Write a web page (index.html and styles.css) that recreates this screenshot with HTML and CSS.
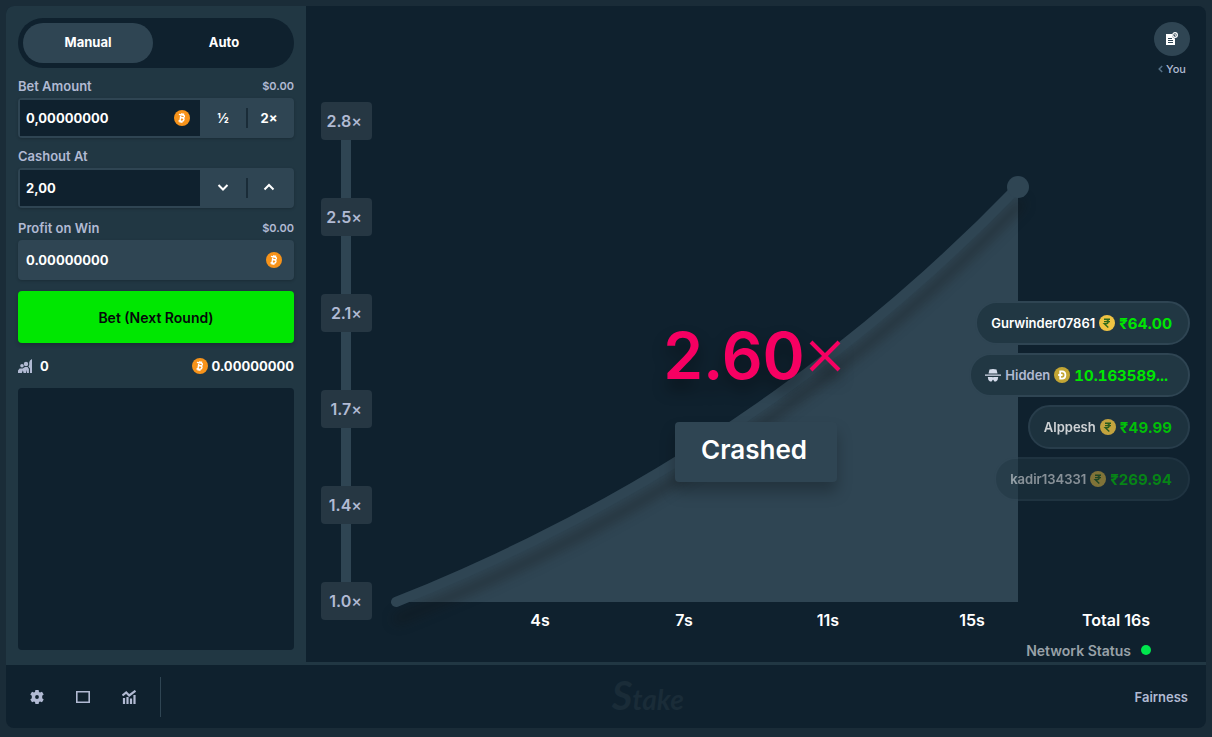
FILE: index.html
```html
<!DOCTYPE html>
<html lang="en">
<head>
    <meta charset="UTF-8">
    <meta name="viewport" content="width=device-width, initial-scale=1.0">
    <title>Crash - Stake</title>
    <link rel="stylesheet" href="styles.css">
</head>
<body>
    <!-- shared icons -->
    <svg class="sprite" aria-hidden="true">
        <symbol id="btc" viewBox="0 0 16 16">
            <circle cx="8" cy="8" r="8" fill="#f7931a"/>
            <path d="M7 4.1 5.9 11.6M4.9 4.4 8.8 5Q10.8 5.4 10.3 6.9 9.9 8.1 8 7.8L6.5 7.6M8.2 7.8Q10.4 8.2 9.9 9.8 9.4 11.6 7.2 11.3L4.4 10.9M8 3.2 7.8 4.7M9.6 3.5 9.4 5M6.3 11.2 6.1 12.7M7.9 11.4 7.7 12.8" fill="none" stroke="#fff" stroke-width="1.4"/>
        </symbol>
        <symbol id="inr" viewBox="0 0 16 16">
            <circle cx="8" cy="8" r="8" fill="#f0c443"/>
            <path d="M5 4.3h6M5 6.6h6M5 4.3h1.8q2.4 0 2.4 2.2T6.8 8.8H5.3L9.3 12.6" fill="none" stroke="#2f6b1c" stroke-width="1.4"/>
        </symbol>
        <symbol id="doge" viewBox="0 0 16 16">
            <circle cx="8" cy="8" r="8" fill="#c3a634"/>
            <path d="M6.2 4.4H8q3.4 0 3.4 3.6T8 11.6H6.2zM4.2 8h4.4" fill="none" stroke="#fff" stroke-width="1.8"/>
        </symbol>
    </svg>

    <div class="game">
        <div class="game-content">
            <form class="sidebar">
                <div class="tabs">
                    <button type="button" class="tab active">Manual</button>
                    <button type="button" class="tab">Auto</button>
                </div>

                <div class="field">
                    <div class="field-label">
                        <label for="bet-amount">Bet Amount</label>
                        <span class="fiat">$0.00</span>
                    </div>
                    <div class="field-box">
                        <div class="input-wrap">
                            <input type="text" id="bet-amount" value="0,00000000">
                            <svg class="coin"><use href="#btc"/></svg>
                        </div>
                        <button type="button" class="box-btn">½</button>
                        <button type="button" class="box-btn">2×</button>
                    </div>
                </div>

                <div class="field">
                    <div class="field-label">
                        <label for="cashout">Cashout At</label>
                    </div>
                    <div class="field-box">
                        <div class="input-wrap">
                            <input type="text" id="cashout" value="2,00">
                        </div>
                        <button type="button" class="box-btn" aria-label="Decrease">
                            <svg width="12" height="12" viewBox="0 0 12 12"><path d="M1.5 4 6 8.5 10.5 4" fill="none" stroke="currentColor" stroke-width="2"/></svg>
                        </button>
                        <button type="button" class="box-btn" aria-label="Increase">
                            <svg width="12" height="12" viewBox="0 0 12 12"><path d="M1.5 8.5 6 4l4.5 4.5" fill="none" stroke="currentColor" stroke-width="2"/></svg>
                        </button>
                    </div>
                </div>

                <div class="field field-profit">
                    <div class="field-label">
                        <label for="profit">Profit on Win</label>
                        <span class="fiat">$0.00</span>
                    </div>
                    <div class="field-box readonly">
                        <div class="input-wrap">
                            <input type="text" id="profit" value="0.00000000" readonly>
                            <svg class="coin"><use href="#btc"/></svg>
                        </div>
                    </div>
                </div>

                <button type="button" class="bet-btn">Bet (Next Round)</button>

                <div class="totals">
                    <span class="total">
                        <svg class="players" width="14" height="14" viewBox="0 0 14 14" fill="currentColor">
                            <circle cx="4" cy="6.8" r="1.8"/>
                            <circle cx="8" cy="5" r="2.2"/>
                            <path d="M11.200 3.600Q11.400 1 14 0v14h-2V9.500l-1.600-1.900Q11.700 6 11.200 3.600zM0 11.500 1.600 9.400h3L7 8h2.600l1.300 2V14H9v-3.200L8 14H5.600l-.7-2.700L3.800 14H0z"/>
                        </svg>
                        0
                    </span>
                    <span class="total total-bet">
                        <svg class="coin"><use href="#btc"/></svg>
                        0.00000000
                    </span>
                </div>

                <div class="bet-list"></div>
            </form>

            <main class="stage">
                <div class="chart">
                    <div class="y-axis">
                        <span class="tick">2.8<i>×</i></span>
                        <span class="tick">2.5<i>×</i></span>
                        <span class="tick">2.1<i>×</i></span>
                        <span class="tick">1.7<i>×</i></span>
                        <span class="tick">1.4<i>×</i></span>
                        <span class="tick">1.0<i>×</i></span>
                    </div>
                    <svg class="plot" viewBox="0 0 792 500" preserveAspectRatio="none">
                        <path class="area" d="M0 500Q359 357 622 85V500z"/>
                        <path class="curve" d="M0 500Q359 357 622 85"/>
                        <circle class="head" cx="622" cy="85" r="11"/>
                    </svg>
                    <div class="x-axis">
                        <span>4s</span>
                        <span>7s</span>
                        <span>11s</span>
                        <span>15s</span>
                        <span>Total 16s</span>
                    </div>
                </div>
                <div class="network">Network Status <span class="dot"></span></div>

                <div class="result">
                    <div class="multiplier">
                        2.60<svg class="times" width="32" height="32" viewBox="0 0 32 32"><path d="M2 2l28 28M30 2 2 30" stroke="currentColor" stroke-width="4"/></svg>
                    </div>
                    <div class="status">Crashed</div>
                </div>

                <div class="history">
                    <button class="history-btn" aria-label="Past bets">
                        <svg width="12" height="13" viewBox="0 0 12 13">
                            <path d="M0 2h6.2a3.4 3.4 0 0 0 2.8 4.6V13H0z" fill="#fff"/>
                            <path d="M2 6.5h4M2 8.5h5M2 10.5h5" stroke="#2f4553" stroke-width="1"/>
                            <circle cx="9" cy="3" r="2.3" fill="none" stroke="#fff" stroke-width="1.3"/>
                            <path d="M9 1.8V3.2h1" fill="none" stroke="#fff" stroke-width="1"/>
                        </svg>
                    </button>
                    <span class="you">
                        <svg width="5" height="8" viewBox="0 0 5 8"><path d="M4.2 1 1.2 4l3 3" fill="none" stroke="#557086" stroke-width="1.5"/></svg>
                        You
                    </span>
                </div>

                <div class="cashouts">
                    <div class="cashout">
                        <span class="name">Gurwinder07861</span>
                        <svg class="coin"><use href="#inr"/></svg>
                        <span class="amount">₹64.00</span>
                    </div>
                    <div class="cashout">
                        <svg class="ghost" width="16" height="13" viewBox="0 0 16 13" fill="currentColor">
                            <path d="M4.500.6Q8-.4 11.500.6L12.500 4.600h-9zM0 5.400h16v1.300H0zM2.800 8h4.600l.6.600.6-.6h4.600l-.6 3-1.600 1.600H9.400L8 10.600l-1.400 2H5L3.400 11z"/>
                        </svg>
                        <span class="name hidden-name">Hidden</span>
                        <svg class="coin"><use href="#doge"/></svg>
                        <span class="amount wide">10.163589...</span>
                    </div>
                    <div class="cashout fading">
                        <span class="name">Alppesh</span>
                        <svg class="coin"><use href="#inr"/></svg>
                        <span class="amount">₹49.99</span>
                    </div>
                    <div class="cashout faded">
                        <span class="name">kadir134331</span>
                        <svg class="coin"><use href="#inr"/></svg>
                        <span class="amount">₹269.94</span>
                    </div>
                </div>
            </main>
        </div>

        <footer class="footer">
            <div class="tools">
                <button class="tool" aria-label="Settings">
                    <svg width="14" height="14" viewBox="0 0 14 14"><path fill="currentColor" fill-rule="evenodd" d="M5.400 0h3.200l.4 2 1 .5 2-.8L13.700 4.400 12.200 5.800v2.400l1.500 1.400L12 12.300l-2-.8-1 .5-.4 2H5.400L5 12l-1-.5-2 .8L.3 9.600l1.500-1.400V5.800L.3 4.400 2 1.700l2 .8L5 2zM7 5.100A1.900 1.900 0 1 0 7 8.900 1.900 1.900 0 1 0 7 5.100z"/></svg>
                </button>
                <button class="tool" aria-label="Theatre mode">
                    <svg width="14" height="12" viewBox="0 0 14 12"><path fill="none" stroke="currentColor" stroke-width="1.6" d="M.8.8h12.400v10.400H.8z"/></svg>
                </button>
                <button class="tool" aria-label="Live stats">
                    <svg width="14" height="14" viewBox="0 0 14 14"><path fill="none" stroke="currentColor" stroke-width="2.2" d="M.5 5.500 4.200 2.500 7.200 5.500 13.500.8M2 14V8M5.500 14V7M9 14V8.500M12.500 14V5"/></svg>
                </button>
            </div>
            <div class="logo">Stake</div>
            <a class="fairness" href="#fairness">Fairness</a>
        </footer>
    </div>
</body>
</html>
```

FILE: styles.css
```css
:root {
    --page: #1a2c38;
    --dark: #0f212e;
    --panel: #213743;
    --raised: #2f4553;
    --muted: #b1bad3;
    --green: #00e701;
}
* {
    margin: 0;
    padding: 0;
    box-sizing: border-box;
}
body {
    background: var(--page);
    color: #fff;
    font-family: Inter, "Liberation Sans", sans-serif;
    font-size: 13px;
    font-weight: 600;
}
button, input {
    border: none;
    background: none;
    color: inherit;
    font: inherit;
    font-weight: 700;
}
button {
    cursor: pointer;
}
.sprite {
    display: none;
}
.coin {
    flex: none;
    width: 16px;
    height: 16px;
}
.game {
    display: flex;
    flex-direction: column;
    min-height: 100vh;
    padding: 6px 6px 9px;
}
.game-content {
    flex: 1;
    display: flex;
    background: var(--dark);
    border-radius: 8px 8px 0 0;
    border-bottom: 3px solid var(--panel);
}

/* sidebar */
.sidebar {
    flex: none;
    display: flex;
    flex-direction: column;
    width: 300px;
    padding: 12px;
    background: var(--panel);
    border-radius: 8px 0 0 0;
}
.tabs {
    display: flex;
    gap: 6px;
    height: 50px;
    padding: 5px;
    background: var(--dark);
    border-radius: 25px;
}
.tab {
    flex: 1;
    padding-bottom: 2px;
    border-radius: 20px;
}
.tab.active {
    background: var(--raised);
}
.field {
    margin-top: 6px;
}
.field-profit {
    margin-top: 8px;
}
.field-label {
    display: flex;
    align-items: center;
    justify-content: space-between;
    height: 24px;
    color: var(--muted);
}
.fiat {
    font-size: 11px;
}
.field-box {
    display: flex;
    height: 40px;
    padding: 2px;
    background: var(--raised);
    border-radius: 4px;
    box-shadow: 0 1px 3px rgba(0, 0, 0, 0.2);
}
.input-wrap {
    flex: 1;
    display: flex;
    align-items: center;
    min-width: 0;
    padding: 0 10px 0 6px;
    background: var(--dark);
}
.input-wrap input {
    flex: 1;
    min-width: 0;
}
.readonly .input-wrap {
    background: none;
}
.box-btn {
    position: relative;
    width: 46px;
}
.box-btn + .box-btn::before {
    content: "";
    position: absolute;
    left: 0;
    top: 8px;
    width: 2px;
    height: 20px;
    background: var(--page);
}
.bet-btn {
    height: 52px;
    margin-top: 11px;
    background: var(--green);
    color: #05080a;
    font-size: 14px;
    font-weight: 600;
    border-radius: 4px;
    box-shadow: 0 2px 4px rgba(0, 0, 0, 0.2);
}
.totals {
    display: flex;
    justify-content: space-between;
    height: 45px;
    font-weight: 700;
}
.total {
    display: flex;
    align-items: center;
    gap: 8px;
}
.total-bet {
    gap: 4px;
}
.players {
    color: var(--muted);
}
.bet-list {
    flex: 1;
    min-height: 120px;
    background: var(--dark);
    border-radius: 4px;
}

/* chart */
.stage {
    position: relative;
    flex: 1;
    display: flex;
    flex-direction: column;
    min-width: 0;
    padding: 96px 18px 0 15px;
}
.chart {
    flex: 1;
    display: grid;
    grid-template-columns: 51px 1fr;
    grid-template-rows: 1fr 36px;
    column-gap: 24px;
}
.y-axis {
    grid-row: 1 / 3;
    display: flex;
    flex-direction: column;
    justify-content: space-between;
    margin-bottom: 18px;
    background: linear-gradient(var(--raised), var(--raised)) 20px 0 / 10px 100% no-repeat;
}
.tick {
    height: 38px;
    padding-right: 10px;
    background: #263743;
    border-radius: 4px;
    color: var(--muted);
    font-size: 16px;
    line-height: 38px;
    text-align: right;
}
.tick i {
    font-style: normal;
    font-weight: 500;
}
.plot {
    width: 100%;
    height: 100%;
    min-height: 0;
    overflow: visible;
}
.area, .head {
    fill: var(--raised);
}
.curve {
    fill: none;
    stroke: var(--raised);
    stroke-width: 10;
    stroke-linecap: round;
    filter: drop-shadow(2px 17px 6px rgba(20, 20, 20, 0.35));
}
.x-axis {
    display: grid;
    grid-template-columns: repeat(5, 1fr);
    align-items: center;
    margin-left: 72px;
    font-size: 16px;
    text-align: center;
}
.network {
    display: flex;
    align-items: center;
    justify-content: flex-end;
    gap: 10px;
    height: 24px;
    padding-right: 37px;
    color: #98a1a8;
    font-size: 14px;
}
.dot {
    width: 10px;
    height: 10px;
    background: #00e64d;
    border-radius: 50%;
}

/* overlays on the chart */
.result {
    position: absolute;
    top: 311px;
    left: 0;
    right: 0;
    display: flex;
    flex-direction: column;
    align-items: center;
    gap: 27px;
}
.multiplier {
    display: flex;
    align-items: center;
    gap: 4px;
    padding-right: 8px;
    color: #f60062;
    font-size: 64px;
    line-height: 78px;
    filter: drop-shadow(0 10px 8px rgba(0, 0, 0, 0.4));
}
.status {
    width: 162px;
    height: 60px;
    padding-right: 4px;
    background: var(--raised);
    border-radius: 4px;
    box-shadow: 0 10px 15px rgba(0, 0, 0, 0.25);
    font-size: 26px;
    line-height: 56px;
    text-align: center;
}
.history {
    position: absolute;
    top: 16px;
    right: 16px;
    display: flex;
    flex-direction: column;
    align-items: center;
    gap: 6px;
}
.history-btn {
    display: flex;
    align-items: center;
    justify-content: center;
    width: 36px;
    height: 34px;
    padding-bottom: 2px;
    background: var(--raised);
    border-radius: 50%;
}
.you {
    display: flex;
    align-items: center;
    gap: 3px;
    color: var(--muted);
    font-size: 11px;
    font-weight: 500;
}
.cashouts {
    position: absolute;
    top: 295px;
    right: 16px;
    display: flex;
    flex-direction: column;
    align-items: flex-end;
    gap: 8px;
}
.cashout {
    display: flex;
    align-items: center;
    gap: 4px;
    height: 44px;
    padding: 0 16px 0 14px;
    background: var(--panel);
    border: 2px solid var(--raised);
    border-radius: 22px;
}
.cashout.fading {
    opacity: 0.8;
}
.cashout.faded {
    opacity: 0.5;
}
.amount {
    color: var(--green);
    font-size: 15px;
    font-weight: 700;
}
.amount.wide {
    padding-right: 4px;
    font-variant-numeric: tabular-nums;
}
.ghost {
    color: #d5dceb;
}
.hidden-name {
    color: var(--muted);
}

/* footer */
.footer {
    display: flex;
    align-items: center;
    height: 63px;
    padding-right: 18px;
    background: var(--dark);
    border-radius: 0 0 8px 8px;
}
.tools {
    display: flex;
    align-items: center;
    height: 40px;
    padding: 0 8px;
    border-right: 1px solid var(--raised);
}
.tool {
    display: flex;
    align-items: center;
    justify-content: center;
    width: 46px;
    height: 40px;
    color: var(--muted);
}
.logo {
    flex: 1;
    color: #1a2c38;
    font-family: Lato, sans-serif;
    font-size: 28px;
    font-style: italic;
    font-weight: 700;
    line-height: 40px;
    text-align: center;
}
.logo::first-letter {
    font-size: 40px;
}
.fairness {
    color: var(--muted);
    text-decoration: none;
}
```
